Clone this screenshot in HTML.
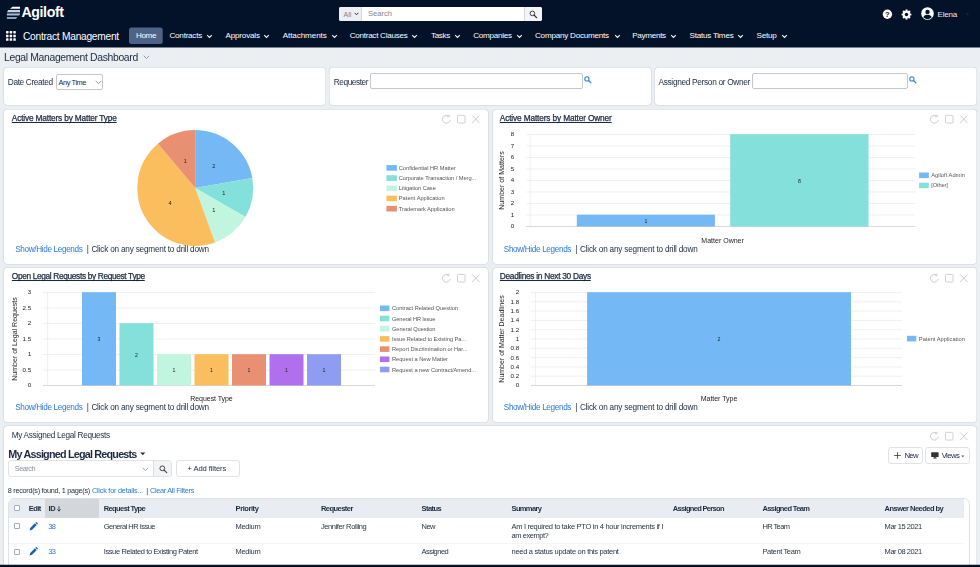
<!DOCTYPE html>
<html><head><meta charset="utf-8"><title>Legal Management Dashboard</title>
<style>
*{box-sizing:border-box;margin:0;padding:0}
html,body{width:980px;height:567px;overflow:hidden;background:#eceff2;font-family:"Liberation Sans",sans-serif;color:#1b2a3f;font-size:9px}
.abs{position:absolute}
.t{position:absolute;white-space:nowrap}
#hdr{position:absolute;left:0;top:0;width:980px;height:48px;background:linear-gradient(#031229,#031229) no-repeat 0 0/980px 47px,#79838f}
.panel{position:absolute;background:#fff;border:1px solid #dde2e8;border-radius:4px}
.inp{position:absolute;background:#fff;border:1px solid #c4c8cd;border-radius:2px}
.btn{position:absolute;background:#fff;border:1px solid #dfe2e6;border-radius:3px}
svg text{font-family:"Liberation Sans",sans-serif}
#charts{position:absolute;left:0;top:0}
#wrap{position:absolute;left:0;top:0;width:980px;height:567px;overflow:hidden;opacity:.999}
</style></head><body>
<div id="wrap">
<div id="hdr">
  <svg class="abs" style="left:0;top:0" width="70" height="24" viewBox="0 0 70 24">
    <path d="M7.2 12.1 H20 V13.5 H6.9 Z" fill="#3a4963"/>
    <path d="M12.6 6.8 H20 V8.7 H10 Z" fill="#ffffff"/>
    <path d="M8.1 10.1 H20 V12.1 H7.1 Z" fill="#c6d1e1"/>
    <path d="M6.9 13.6 H20 V14.6 L19 15.6 H6.9 Z" fill="#a9b8ce"/>
    <path d="M6.9 17 H17.4 L15.9 18.9 H6.9 Z" fill="#8e9fb9"/>
    <text x="21.4" y="16.9" font-size="14.2" font-weight="bold" fill="#fff" textLength="42.6" lengthAdjust="spacing">Agiloft</text>
  </svg>
  <div class="abs" style="left:339px;top:7px;width:203.4px;height:14px;background:#fff;border-radius:2px;overflow:hidden">
    <div class="abs" style="left:0;top:0;width:22.5px;height:14px;background:#eceff3;border-right:1px solid #d5d9df"></div>
    <div class="abs" style="left:4.5px;top:2.5px;font-size:7px;color:#7d8593;line-height:9px">All</div>
    <svg class="abs" style="left:14.5px;top:5.3px" width="5" height="4" viewBox="0 0 5 4"><path d="M0.6 0.8 L2.5 2.8 L4.4 0.8" fill="none" stroke="#333" stroke-width="1"/></svg>
    <div class="abs" style="left:29px;top:2px;font-size:7.6px;color:#7d8593;line-height:10px">Search</div>
    <div class="abs" style="left:184.5px;top:0;width:19px;height:14px;background:#f4f5f7;border-left:1px solid #d5d9df"></div>
    <svg class="abs" style="left:190px;top:3px" width="9" height="9" viewBox="0 0 9 9"><circle cx="3.4" cy="3.4" r="2.3" fill="none" stroke="#333" stroke-width="0.95"/><path d="M5.2 5.2 L7.6 7.6" stroke="#333" stroke-width="1.25" stroke-linecap="round"/></svg>
  </div>
  <svg class="abs" style="left:882px;top:9px" width="11" height="11" viewBox="0 0 11 11"><circle cx="5.4" cy="5.2" r="4.7" fill="#fff"/><text x="5.4" y="8" font-size="7.5" font-weight="bold" text-anchor="middle" fill="#031229">?</text></svg>
  <svg class="abs" style="left:901.3px;top:8.8px" width="11" height="11" viewBox="0 0 11 11"><g fill="#fff"><circle cx="5.5" cy="5.5" r="3.6"/><rect x="4.4" y="0.6" width="2.2" height="9.8" rx=".5"/><rect x="4.4" y="0.6" width="2.2" height="9.8" rx=".5" transform="rotate(45 5.5 5.5)"/><rect x="4.4" y="0.6" width="2.2" height="9.8" rx=".5" transform="rotate(90 5.5 5.5)"/><rect x="4.4" y="0.6" width="2.2" height="9.8" rx=".5" transform="rotate(135 5.5 5.5)"/></g><circle cx="5.5" cy="5.5" r="1.7" fill="#031229"/></svg>
  <svg class="abs" style="left:921px;top:7.4px" width="13" height="13" viewBox="0 0 13 13"><circle cx="6.5" cy="6.5" r="6.3" fill="#fff"/><circle cx="6.5" cy="4.9" r="2.2" fill="#031229"/><path d="M2.3 10.2 C3 8.2 5 7.7 6.5 7.7 C8 7.7 10 8.2 10.7 10.2 C9.6 11.4 8.1 12 6.5 12 C4.9 12 3.4 11.4 2.3 10.2Z" fill="#031229"/></svg>
  <svg class="abs" style="left:5.9px;top:31px" width="11" height="11" viewBox="0 0 11 11" fill="#fff"><rect x="0.00" y="0.00" width="2.5" height="2.5" rx=".4"/><rect x="3.65" y="0.00" width="2.5" height="2.5" rx=".4"/><rect x="7.30" y="0.00" width="2.5" height="2.5" rx=".4"/><rect x="0.00" y="3.65" width="2.5" height="2.5" rx=".4"/><rect x="3.65" y="3.65" width="2.5" height="2.5" rx=".4"/><rect x="7.30" y="3.65" width="2.5" height="2.5" rx=".4"/><rect x="0.00" y="7.30" width="2.5" height="2.5" rx=".4"/><rect x="3.65" y="7.30" width="2.5" height="2.5" rx=".4"/><rect x="7.30" y="7.30" width="2.5" height="2.5" rx=".4"/></svg>
  <svg class="abs" style="left:0;top:0" width="200" height="47"><rect x="129" y="27.6" width="33.7" height="16.5" rx="2.5" fill="#4f6386"/></svg>

<div class="t " style="left:937.60px;top:9.50px;font-size:8px;line-height:10px;letter-spacing:-0.212px;color:#e8ebf0;">Elena</div>
<svg class="abs" style="left:964.5px;top:12.5px" width="5" height="4" viewBox="0 0 5 4"><path d="M0.3 0.5 H4.3 L2.3 2.8Z" fill="#16243c"/></svg>
<div class="t " style="left:23.00px;top:30.50px;font-size:10.2px;line-height:12px;letter-spacing:-0.259px;color:#fff;">Contract Management</div>
<div class="t " style="left:135.90px;top:30.50px;font-size:8.1px;line-height:10px;letter-spacing:-0.352px;color:#fff;">Home</div>
<div class="t " style="left:169.50px;top:30.50px;font-size:8.1px;line-height:10px;letter-spacing:-0.240px;color:#fff;">Contracts</div>
<svg class="abs" style="left:205.8px;top:33.6px" width="7" height="5" viewBox="0 0 7 5"><path d="M1.2 1.1 L3.5 3.4 L5.8 1.1" fill="none" stroke="#fff" stroke-width="1.05"/></svg>
<div class="t " style="left:225.50px;top:30.50px;font-size:8.1px;line-height:10px;letter-spacing:-0.191px;color:#fff;">Approvals</div>
<svg class="abs" style="left:263.2px;top:33.6px" width="7" height="5" viewBox="0 0 7 5"><path d="M1.2 1.1 L3.5 3.4 L5.8 1.1" fill="none" stroke="#fff" stroke-width="1.05"/></svg>
<div class="t " style="left:282.70px;top:30.50px;font-size:8.1px;line-height:10px;letter-spacing:-0.093px;color:#fff;">Attachments</div>
<svg class="abs" style="left:330.5px;top:33.6px" width="7" height="5" viewBox="0 0 7 5"><path d="M1.2 1.1 L3.5 3.4 L5.8 1.1" fill="none" stroke="#fff" stroke-width="1.05"/></svg>
<div class="t " style="left:349.70px;top:30.50px;font-size:8.1px;line-height:10px;letter-spacing:-0.270px;color:#fff;">Contract Clauses</div>
<svg class="abs" style="left:411.0px;top:33.6px" width="7" height="5" viewBox="0 0 7 5"><path d="M1.2 1.1 L3.5 3.4 L5.8 1.1" fill="none" stroke="#fff" stroke-width="1.05"/></svg>
<div class="t " style="left:431.00px;top:30.50px;font-size:8.1px;line-height:10px;letter-spacing:-0.341px;color:#fff;">Tasks</div>
<svg class="abs" style="left:453.7px;top:33.6px" width="7" height="5" viewBox="0 0 7 5"><path d="M1.2 1.1 L3.5 3.4 L5.8 1.1" fill="none" stroke="#fff" stroke-width="1.05"/></svg>
<div class="t " style="left:473.20px;top:30.50px;font-size:8.1px;line-height:10px;letter-spacing:-0.275px;color:#fff;">Companies</div>
<svg class="abs" style="left:515.7px;top:33.6px" width="7" height="5" viewBox="0 0 7 5"><path d="M1.2 1.1 L3.5 3.4 L5.8 1.1" fill="none" stroke="#fff" stroke-width="1.05"/></svg>
<div class="t " style="left:535.00px;top:30.50px;font-size:8.1px;line-height:10px;letter-spacing:-0.229px;color:#fff;">Company Documents</div>
<svg class="abs" style="left:613.5px;top:33.6px" width="7" height="5" viewBox="0 0 7 5"><path d="M1.2 1.1 L3.5 3.4 L5.8 1.1" fill="none" stroke="#fff" stroke-width="1.05"/></svg>
<div class="t " style="left:632.20px;top:30.50px;font-size:8.1px;line-height:10px;letter-spacing:-0.289px;color:#fff;">Payments</div>
<svg class="abs" style="left:669.7px;top:33.6px" width="7" height="5" viewBox="0 0 7 5"><path d="M1.2 1.1 L3.5 3.4 L5.8 1.1" fill="none" stroke="#fff" stroke-width="1.05"/></svg>
<div class="t " style="left:689.50px;top:30.50px;font-size:8.1px;line-height:10px;letter-spacing:-0.235px;color:#fff;">Status Times</div>
<svg class="abs" style="left:737.2px;top:33.6px" width="7" height="5" viewBox="0 0 7 5"><path d="M1.2 1.1 L3.5 3.4 L5.8 1.1" fill="none" stroke="#fff" stroke-width="1.05"/></svg>
<div class="t " style="left:756.50px;top:30.50px;font-size:8.1px;line-height:10px;letter-spacing:-0.234px;color:#fff;">Setup</div>
<svg class="abs" style="left:780.5px;top:33.6px" width="7" height="5" viewBox="0 0 7 5"><path d="M1.2 1.1 L3.5 3.4 L5.8 1.1" fill="none" stroke="#fff" stroke-width="1.05"/></svg>
</div>
<div class="t " style="left:4.00px;top:51.50px;font-size:10.4px;line-height:12px;letter-spacing:-0.339px;color:#1b2a3f;">Legal Management Dashboard</div>
<svg class="abs" style="left:143px;top:54.5px" width="7" height="5" viewBox="0 0 7 5"><path d="M0.8 0.8 L3.5 3.6 L6.2 0.8" fill="none" stroke="#8a919c" stroke-width="0.9"/></svg>
<svg class="abs" style="left:0;top:0" width="980" height="567" viewBox="0 0 980 567">
<rect x="3.5" y="67" width="322.5" height="38.5" rx="4" fill="#c9d1db"/>
<rect x="4.0" y="67.5" width="321.5" height="37.5" rx="3.5" fill="#fff"/>
<rect x="329" y="67" width="322.5" height="38.5" rx="4" fill="#c9d1db"/>
<rect x="329.5" y="67.5" width="321.5" height="37.5" rx="3.5" fill="#fff"/>
<rect x="654.5" y="67" width="322.5" height="38.5" rx="4" fill="#c9d1db"/>
<rect x="655.0" y="67.5" width="321.5" height="37.5" rx="3.5" fill="#fff"/>
<rect x="3.5" y="109" width="485.0" height="155.5" rx="4" fill="#c9d1db"/>
<rect x="4.0" y="109.5" width="484.0" height="154.5" rx="3.5" fill="#fff"/>
<rect x="492.5" y="109" width="484.5" height="155.5" rx="4" fill="#c9d1db"/>
<rect x="493.0" y="109.5" width="483.5" height="154.5" rx="3.5" fill="#fff"/>
<rect x="3.5" y="267.3" width="485.0" height="155.5" rx="4" fill="#c9d1db"/>
<rect x="4.0" y="267.8" width="484.0" height="154.5" rx="3.5" fill="#fff"/>
<rect x="492.5" y="267.3" width="484.5" height="155.5" rx="4" fill="#c9d1db"/>
<rect x="493.0" y="267.8" width="483.5" height="154.5" rx="3.5" fill="#fff"/>
<rect x="3.5" y="425.5" width="973.5" height="154.5" rx="4" fill="#c9d1db"/>
<rect x="4.0" y="426.0" width="972.5" height="153.5" rx="3.5" fill="#fff"/>
</svg>
<div class="t " style="left:7.80px;top:77.00px;font-size:8.3px;line-height:10px;letter-spacing:-0.372px;color:#1b2a3f;">Date Created</div>
<div class="inp" style="left:56px;top:74px;width:46.5px;height:16px"></div>
<div class="t " style="left:58.60px;top:78.00px;font-size:7.4px;line-height:9px;letter-spacing:-0.418px;color:#1b2a3f;">Any Time</div>
<svg class="abs" style="left:94.8px;top:80px" width="7" height="5" viewBox="0 0 7 5"><path d="M0.8 0.8 L3.5 3.6 L6.2 0.8" fill="none" stroke="#8a919c" stroke-width="0.8"/></svg>
<div class="t " style="left:333.75px;top:77.00px;font-size:8.3px;line-height:10px;letter-spacing:-0.444px;color:#1b2a3f;">Requester</div>
<div class="inp" style="left:370px;top:73px;width:213.4px;height:16px"></div>
<div class="t " style="left:658.50px;top:77.00px;font-size:8.3px;line-height:10px;letter-spacing:-0.320px;color:#1b2a3f;">Assigned Person or Owner</div>
<div class="inp" style="left:752px;top:73px;width:156px;height:16px"></div>
<svg class="abs" style="left:583.9px;top:75.9px" width="8" height="8" viewBox="0 0 8 8"><circle cx="2.9" cy="2.9" r="2.1" fill="none" stroke="#2e86d6" stroke-width="1.1"/><path d="M4.5 4.5 L6.9 6.9" stroke="#2e86d6" stroke-width="1.3" stroke-linecap="round"/></svg>
<svg class="abs" style="left:908.6px;top:75.9px" width="8" height="8" viewBox="0 0 8 8"><circle cx="2.9" cy="2.9" r="2.1" fill="none" stroke="#2e86d6" stroke-width="1.1"/><path d="M4.5 4.5 L6.9 6.9" stroke="#2e86d6" stroke-width="1.3" stroke-linecap="round"/></svg>
<svg class="abs" style="left:442.2px;top:114.3px" width="40" height="10" viewBox="0 0 40 10" fill="none" stroke="#c3c7cd" stroke-width="0.9"><path d="M6.75 2.1 A3.9 3.9 0 1 0 8.25 5.9"/><path d="M7.1 0.7 V2.6 H5.2" stroke-width="0.8"/><rect x="15.5" y="1.4" width="7.5" height="7.6" rx="0.8" stroke-width="0.8"/><path d="M30.2 1.5 L37.4 9 M37.4 1.5 L30.2 9"/></svg>
<svg class="abs" style="left:930.0px;top:114.3px" width="40" height="10" viewBox="0 0 40 10" fill="none" stroke="#c3c7cd" stroke-width="0.9"><path d="M6.75 2.1 A3.9 3.9 0 1 0 8.25 5.9"/><path d="M7.1 0.7 V2.6 H5.2" stroke-width="0.8"/><rect x="15.5" y="1.4" width="7.5" height="7.6" rx="0.8" stroke-width="0.8"/><path d="M30.2 1.5 L37.4 9 M37.4 1.5 L30.2 9"/></svg>
<svg class="abs" style="left:442.2px;top:272.5px" width="40" height="10" viewBox="0 0 40 10" fill="none" stroke="#c3c7cd" stroke-width="0.9"><path d="M6.75 2.1 A3.9 3.9 0 1 0 8.25 5.9"/><path d="M7.1 0.7 V2.6 H5.2" stroke-width="0.8"/><rect x="15.5" y="1.4" width="7.5" height="7.6" rx="0.8" stroke-width="0.8"/><path d="M30.2 1.5 L37.4 9 M37.4 1.5 L30.2 9"/></svg>
<svg class="abs" style="left:930.0px;top:272.5px" width="40" height="10" viewBox="0 0 40 10" fill="none" stroke="#c3c7cd" stroke-width="0.9"><path d="M6.75 2.1 A3.9 3.9 0 1 0 8.25 5.9"/><path d="M7.1 0.7 V2.6 H5.2" stroke-width="0.8"/><rect x="15.5" y="1.4" width="7.5" height="7.6" rx="0.8" stroke-width="0.8"/><path d="M30.2 1.5 L37.4 9 M37.4 1.5 L30.2 9"/></svg>
<svg class="abs" style="left:930.0px;top:431px" width="40" height="10" viewBox="0 0 40 10" fill="none" stroke="#c3c7cd" stroke-width="0.9"><path d="M6.75 2.1 A3.9 3.9 0 1 0 8.25 5.9"/><path d="M7.1 0.7 V2.6 H5.2" stroke-width="0.8"/><rect x="15.5" y="1.4" width="7.5" height="7.6" rx="0.8" stroke-width="0.8"/><path d="M30.2 1.5 L37.4 9 M37.4 1.5 L30.2 9"/></svg>
<div class="t " style="left:11.80px;top:113.00px;font-size:8.3px;line-height:10px;letter-spacing:-0.163px;color:#1b2a3f;text-decoration:underline;text-underline-offset:0.5px;text-decoration-thickness:0.8px;text-decoration-skip-ink:none;-webkit-text-stroke:0.25px #1b2a3f;">Active Matters by Matter Type</div>
<div class="t " style="left:499.80px;top:113.00px;font-size:8.3px;line-height:10px;letter-spacing:-0.144px;color:#1b2a3f;text-decoration:underline;text-underline-offset:0.5px;text-decoration-thickness:0.8px;text-decoration-skip-ink:none;-webkit-text-stroke:0.25px #1b2a3f;">Active Matters by Matter Owner</div>
<div class="t " style="left:11.80px;top:271.00px;font-size:8.3px;line-height:10px;letter-spacing:-0.335px;color:#1b2a3f;text-decoration:underline;text-underline-offset:0.5px;text-decoration-thickness:0.8px;text-decoration-skip-ink:none;-webkit-text-stroke:0.25px #1b2a3f;">Open Legal Requests by Request Type</div>
<div class="t " style="left:499.80px;top:271.00px;font-size:8.3px;line-height:10px;letter-spacing:-0.272px;color:#1b2a3f;text-decoration:underline;text-underline-offset:0.5px;text-decoration-thickness:0.8px;text-decoration-skip-ink:none;-webkit-text-stroke:0.25px #1b2a3f;">Deadlines in Next 30 Days</div>
<div class="t " style="left:15.20px;top:244.50px;font-size:8.2px;line-height:10px;letter-spacing:-0.353px;color:#2a79d2;">Show/Hide Legends</div>
<div class="t " style="left:86.70px;top:244.50px;font-size:8.2px;line-height:10px;color:#1b2a3f;">|</div>
<div class="t " style="left:91.40px;top:244.50px;font-size:8.2px;line-height:10px;letter-spacing:-0.198px;color:#1b2a3f;">Click on any segment to drill down</div>
<div class="t " style="left:503.80px;top:244.50px;font-size:8.2px;line-height:10px;letter-spacing:-0.353px;color:#2a79d2;">Show/Hide Legends</div>
<div class="t " style="left:575.30px;top:244.50px;font-size:8.2px;line-height:10px;color:#1b2a3f;">|</div>
<div class="t " style="left:580.00px;top:244.50px;font-size:8.2px;line-height:10px;letter-spacing:-0.198px;color:#1b2a3f;">Click on any segment to drill down</div>
<div class="t " style="left:15.20px;top:402.50px;font-size:8.2px;line-height:10px;letter-spacing:-0.353px;color:#2a79d2;">Show/Hide Legends</div>
<div class="t " style="left:86.70px;top:402.50px;font-size:8.2px;line-height:10px;color:#1b2a3f;">|</div>
<div class="t " style="left:91.40px;top:402.50px;font-size:8.2px;line-height:10px;letter-spacing:-0.198px;color:#1b2a3f;">Click on any segment to drill down</div>
<div class="t " style="left:503.80px;top:402.50px;font-size:8.2px;line-height:10px;letter-spacing:-0.353px;color:#2a79d2;">Show/Hide Legends</div>
<div class="t " style="left:575.30px;top:402.50px;font-size:8.2px;line-height:10px;color:#1b2a3f;">|</div>
<div class="t " style="left:580.00px;top:402.50px;font-size:8.2px;line-height:10px;letter-spacing:-0.198px;color:#1b2a3f;">Click on any segment to drill down</div>
<svg id="charts" width="980" height="567" viewBox="0 0 980 567">
<path d="M195.2 188.1 L195.20 130.10 A58 58 0 0 1 252.32 178.03 Z" fill="#74b9f5"/>
<text x="213.84" y="167.88" font-size="5.6" fill="#222" text-anchor="middle">2</text>
<path d="M195.2 188.1 L252.32 178.03 A58 58 0 0 1 245.43 217.10 Z" fill="#83e0da"/>
<text x="223.76" y="195.14" font-size="5.6" fill="#222" text-anchor="middle">1</text>
<path d="M195.2 188.1 L245.43 217.10 A58 58 0 0 1 215.04 242.60 Z" fill="#c1f5e0"/>
<text x="213.84" y="212.32" font-size="5.6" fill="#222" text-anchor="middle">1</text>
<path d="M195.2 188.1 L215.04 242.60 A58 58 0 0 1 157.92 143.67 Z" fill="#fabe5f"/>
<text x="170.09" y="204.60" font-size="5.6" fill="#222" text-anchor="middle">4</text>
<path d="M195.2 188.1 L157.92 143.67 A58 58 0 0 1 195.20 130.10 Z" fill="#e99073"/>
<text x="185.28" y="162.85" font-size="5.6" fill="#222" text-anchor="middle">1</text>
<rect x="386.4" y="165.1" width="10.5" height="5.6" fill="#74b9f5"/>
<text x="398.80" y="169.90" font-size="5.7" fill="#555" textLength="56.90" lengthAdjust="spacing">Confidential HR Matter</text>
<rect x="386.4" y="175.29" width="10.5" height="5.6" fill="#83e0da"/>
<text x="398.80" y="180.09" font-size="5.7" fill="#555" textLength="77.40" lengthAdjust="spacing">Corporate Transaction / Merg...</text>
<rect x="386.4" y="185.48" width="10.5" height="5.6" fill="#c1f5e0"/>
<text x="398.80" y="190.28" font-size="5.7" fill="#555" textLength="37.00" lengthAdjust="spacing">Litigation Case</text>
<rect x="386.4" y="195.67" width="10.5" height="5.6" fill="#fabe5f"/>
<text x="398.80" y="200.47" font-size="5.7" fill="#555" textLength="45.80" lengthAdjust="spacing">Patent Application</text>
<rect x="386.4" y="205.85999999999999" width="10.5" height="5.6" fill="#e99073"/>
<text x="398.80" y="210.66" font-size="5.7" fill="#555" textLength="55.80" lengthAdjust="spacing">Trademark Application</text>
<text x="514.30" y="228.40" font-size="6.2" fill="#222" text-anchor="end">0</text>
<path d="M526.2 215.00 H915" stroke="#eaeaea" stroke-width="0.7"/>
<text x="514.30" y="216.90" font-size="6.2" fill="#222" text-anchor="end">1</text>
<path d="M526.2 203.50 H915" stroke="#eaeaea" stroke-width="0.7"/>
<text x="514.30" y="205.40" font-size="6.2" fill="#222" text-anchor="end">2</text>
<path d="M526.2 192.00 H915" stroke="#eaeaea" stroke-width="0.7"/>
<text x="514.30" y="193.90" font-size="6.2" fill="#222" text-anchor="end">3</text>
<path d="M526.2 180.50 H915" stroke="#eaeaea" stroke-width="0.7"/>
<text x="514.30" y="182.40" font-size="6.2" fill="#222" text-anchor="end">4</text>
<path d="M526.2 169.00 H915" stroke="#eaeaea" stroke-width="0.7"/>
<text x="514.30" y="170.90" font-size="6.2" fill="#222" text-anchor="end">5</text>
<path d="M526.2 157.50 H915" stroke="#eaeaea" stroke-width="0.7"/>
<text x="514.30" y="159.40" font-size="6.2" fill="#222" text-anchor="end">6</text>
<path d="M526.2 146.00 H915" stroke="#eaeaea" stroke-width="0.7"/>
<text x="514.30" y="147.90" font-size="6.2" fill="#222" text-anchor="end">7</text>
<path d="M526.2 134.50 H915" stroke="#eaeaea" stroke-width="0.7"/>
<text x="514.30" y="136.40" font-size="6.2" fill="#222" text-anchor="end">8</text>
<path d="M530.2 134.5 V226.5" stroke="#eaeaea" stroke-width="0.7"/>
<path d="M526.2 226.5 H915" stroke="#cfcfcf" stroke-width="0.8"/>
<rect x="576.8" y="214.70" width="138.10" height="11.80" fill="#74b9f5"/>
<text x="645.85" y="222.75" font-size="5.2" fill="#222" text-anchor="middle">1</text>
<rect x="730.2" y="134.20" width="138.30" height="92.30" fill="#83e0da"/>
<text x="799.35" y="182.50" font-size="5.2" fill="#222" text-anchor="middle">8</text>
<text transform="translate(504.4 180.5) rotate(-90)" font-size="7" fill="#222" text-anchor="middle" textLength="58.5" lengthAdjust="spacing">Number of Matters</text>
<text x="722.60" y="242.60" font-size="7" fill="#222" text-anchor="middle" textLength="42.50" lengthAdjust="spacing">Matter Owner</text>
<rect x="919.1" y="172.5" width="9.7" height="5.6" fill="#74b9f5"/>
<text x="931.25" y="177.30" font-size="5.7" fill="#555" textLength="33.60" lengthAdjust="spacing">Agiloft Admin</text>
<rect x="919.1" y="182.64999999999998" width="9.7" height="5.6" fill="#83e0da"/>
<text x="931.25" y="187.45" font-size="5.7" fill="#555" textLength="16.70" lengthAdjust="spacing">[Other]</text>
<text x="31.20" y="387.40" font-size="6.2" fill="#222" text-anchor="end">0</text>
<path d="M42.9 370.00 H375" stroke="#eaeaea" stroke-width="0.7"/>
<text x="31.20" y="371.90" font-size="6.2" fill="#222" text-anchor="end">0.5</text>
<path d="M42.9 354.50 H375" stroke="#eaeaea" stroke-width="0.7"/>
<text x="31.20" y="356.40" font-size="6.2" fill="#222" text-anchor="end">1</text>
<path d="M42.9 339.00 H375" stroke="#eaeaea" stroke-width="0.7"/>
<text x="31.20" y="340.90" font-size="6.2" fill="#222" text-anchor="end">1.5</text>
<path d="M42.9 323.50 H375" stroke="#eaeaea" stroke-width="0.7"/>
<text x="31.20" y="325.40" font-size="6.2" fill="#222" text-anchor="end">2</text>
<path d="M42.9 308.00 H375" stroke="#eaeaea" stroke-width="0.7"/>
<text x="31.20" y="309.90" font-size="6.2" fill="#222" text-anchor="end">2.5</text>
<path d="M42.9 292.50 H375" stroke="#eaeaea" stroke-width="0.7"/>
<text x="31.20" y="294.40" font-size="6.2" fill="#222" text-anchor="end">3</text>
<path d="M47.6 292.5 V385.5" stroke="#eaeaea" stroke-width="0.7"/>
<path d="M42.9 385.5 H375" stroke="#cfcfcf" stroke-width="0.8"/>
<rect x="82.0" y="292.20" width="34.00" height="93.30" fill="#74b9f5"/>
<text x="99.00" y="341.00" font-size="5.2" fill="#222" text-anchor="middle">3</text>
<rect x="119.5" y="323.20" width="34.00" height="62.30" fill="#83e0da"/>
<text x="136.50" y="356.50" font-size="5.2" fill="#222" text-anchor="middle">2</text>
<rect x="157.0" y="354.20" width="34.00" height="31.30" fill="#c1f5e0"/>
<text x="174.00" y="372.00" font-size="5.2" fill="#222" text-anchor="middle">1</text>
<rect x="194.5" y="354.20" width="34.00" height="31.30" fill="#fabe5f"/>
<text x="211.50" y="372.00" font-size="5.2" fill="#222" text-anchor="middle">1</text>
<rect x="232.0" y="354.20" width="34.00" height="31.30" fill="#e99073"/>
<text x="249.00" y="372.00" font-size="5.2" fill="#222" text-anchor="middle">1</text>
<rect x="269.5" y="354.20" width="34.00" height="31.30" fill="#b070ee"/>
<text x="286.50" y="372.00" font-size="5.2" fill="#222" text-anchor="middle">1</text>
<rect x="307.0" y="354.20" width="34.00" height="31.30" fill="#8e9cf2"/>
<text x="324.00" y="372.00" font-size="5.2" fill="#222" text-anchor="middle">1</text>
<text transform="translate(17.3 339.0) rotate(-90)" font-size="7" fill="#222" text-anchor="middle" textLength="83.5" lengthAdjust="spacing">Number of Legal Requests</text>
<text x="211.50" y="400.90" font-size="7" fill="#222" text-anchor="middle" textLength="42.50" lengthAdjust="spacing">Request Type</text>
<rect x="380" y="305.5" width="9.4" height="5.6" fill="#74b9f5"/>
<text x="392.00" y="310.30" font-size="5.7" fill="#555" textLength="66.00" lengthAdjust="spacing">Contract Related Question</text>
<rect x="380" y="315.7" width="9.4" height="5.6" fill="#83e0da"/>
<text x="392.00" y="320.50" font-size="5.7" fill="#555" textLength="43.50" lengthAdjust="spacing">General HR Issue</text>
<rect x="380" y="325.9" width="9.4" height="5.6" fill="#c1f5e0"/>
<text x="392.00" y="330.70" font-size="5.7" fill="#555" textLength="43.50" lengthAdjust="spacing">General Question</text>
<rect x="380" y="336.1" width="9.4" height="5.6" fill="#fabe5f"/>
<text x="392.00" y="340.90" font-size="5.7" fill="#555" textLength="74.00" lengthAdjust="spacing">Issue Related to Existing Pa...</text>
<rect x="380" y="346.3" width="9.4" height="5.6" fill="#e99073"/>
<text x="392.00" y="351.10" font-size="5.7" fill="#555" textLength="75.50" lengthAdjust="spacing">Report Discrimination or Har...</text>
<rect x="380" y="356.5" width="9.4" height="5.6" fill="#b070ee"/>
<text x="392.00" y="361.30" font-size="5.7" fill="#555" textLength="56.00" lengthAdjust="spacing">Request a New Matter</text>
<rect x="380" y="366.7" width="9.4" height="5.6" fill="#8e9cf2"/>
<text x="392.00" y="371.50" font-size="5.7" fill="#555" textLength="84.00" lengthAdjust="spacing">Request a new Contract/Amend...</text>
<text x="519.10" y="387.40" font-size="6.2" fill="#222" text-anchor="end">0</text>
<path d="M531 376.20 H902" stroke="#eaeaea" stroke-width="0.7"/>
<text x="519.10" y="378.10" font-size="6.2" fill="#222" text-anchor="end">0.2</text>
<path d="M531 366.90 H902" stroke="#eaeaea" stroke-width="0.7"/>
<text x="519.10" y="368.80" font-size="6.2" fill="#222" text-anchor="end">0.4</text>
<path d="M531 357.60 H902" stroke="#eaeaea" stroke-width="0.7"/>
<text x="519.10" y="359.50" font-size="6.2" fill="#222" text-anchor="end">0.6</text>
<path d="M531 348.30 H902" stroke="#eaeaea" stroke-width="0.7"/>
<text x="519.10" y="350.20" font-size="6.2" fill="#222" text-anchor="end">0.8</text>
<path d="M531 339.00 H902" stroke="#eaeaea" stroke-width="0.7"/>
<text x="519.10" y="340.90" font-size="6.2" fill="#222" text-anchor="end">1</text>
<path d="M531 329.70 H902" stroke="#eaeaea" stroke-width="0.7"/>
<text x="519.10" y="331.60" font-size="6.2" fill="#222" text-anchor="end">1.2</text>
<path d="M531 320.40 H902" stroke="#eaeaea" stroke-width="0.7"/>
<text x="519.10" y="322.30" font-size="6.2" fill="#222" text-anchor="end">1.4</text>
<path d="M531 311.10 H902" stroke="#eaeaea" stroke-width="0.7"/>
<text x="519.10" y="313.00" font-size="6.2" fill="#222" text-anchor="end">1.6</text>
<path d="M531 301.80 H902" stroke="#eaeaea" stroke-width="0.7"/>
<text x="519.10" y="303.70" font-size="6.2" fill="#222" text-anchor="end">1.8</text>
<path d="M531 292.50 H902" stroke="#eaeaea" stroke-width="0.7"/>
<text x="519.10" y="294.40" font-size="6.2" fill="#222" text-anchor="end">2</text>
<path d="M535.5 292.5 V385.5" stroke="#eaeaea" stroke-width="0.7"/>
<path d="M531 385.5 H902" stroke="#cfcfcf" stroke-width="0.8"/>
<rect x="587.1" y="292.20" width="263.90" height="93.30" fill="#74b9f5"/>
<text x="719.05" y="341.00" font-size="5.2" fill="#222" text-anchor="middle">2</text>
<text transform="translate(504.4 339.0) rotate(-90)" font-size="7" fill="#222" text-anchor="middle" textLength="87.3" lengthAdjust="spacing">Number of Matter Deadlines</text>
<text x="719.00" y="400.90" font-size="7" fill="#222" text-anchor="middle" textLength="36.60" lengthAdjust="spacing">Matter Type</text>
<rect x="907" y="335.8" width="9.3" height="5.6" fill="#74b9f5"/>
<text x="918.85" y="340.60" font-size="5.7" fill="#555" textLength="46.00" lengthAdjust="spacing">Patent Application</text>
</svg>
<div class="t " style="left:11.70px;top:430.50px;font-size:8.2px;line-height:10px;letter-spacing:-0.287px;color:#1b2a3f;">My Assigned Legal Requests</div>
<div class="t " style="left:8.30px;top:447.50px;font-size:10.8px;line-height:13px;letter-spacing:-0.798px;color:#1b2a3f;font-weight:bold;">My Assigned Legal Requests</div>
<svg class="abs" style="left:139.8px;top:452.3px" width="6" height="4" viewBox="0 0 6 4"><path d="M0.3 0.5 H5.3 L2.8 3.3Z" fill="#1b2a3f"/></svg>
<div class="btn" style="left:8px;top:460px;width:164px;height:17px"></div>
<div class="abs" style="left:152.5px;top:461px;width:18.5px;height:15px;background:#f3f4f6;border-left:1px solid #d9dde2;border-radius:0 3px 3px 0"></div>
<div class="t " style="left:14.80px;top:464.00px;font-size:7.4px;line-height:9px;letter-spacing:-0.525px;color:#8a919c;">Search</div>
<svg class="abs" style="left:141.8px;top:466.5px" width="7" height="5" viewBox="0 0 7 5"><path d="M0.8 0.8 L3.5 3.6 L6.2 0.8" fill="none" stroke="#8a919c" stroke-width="0.8"/></svg>
<svg class="abs" style="left:158.5px;top:464.5px" width="9" height="9" viewBox="0 0 9 9"><circle cx="3.3" cy="3.3" r="2.4" fill="none" stroke="#444" stroke-width="1"/><path d="M5.1 5.1 L7.7 7.7" stroke="#444" stroke-width="1.2" stroke-linecap="round"/></svg>
<div class="btn" style="left:176px;top:460px;width:64px;height:17px"></div>
<div class="t " style="left:187.50px;top:464.00px;font-size:7.6px;line-height:9px;letter-spacing:-0.094px;color:#1b2a3f;">+ Add filters</div>
<div class="t " style="left:7.80px;top:486.00px;font-size:7.3px;line-height:9px;letter-spacing:-0.296px;color:#1b2a3f;">8 record(s) found, 1 page(s)</div>
<div class="t " style="left:91.90px;top:486.00px;font-size:7.3px;line-height:9px;letter-spacing:-0.229px;color:#2a79d2;">Click for details...</div>
<div class="t " style="left:146.30px;top:486.00px;font-size:7.3px;line-height:9px;color:#1b2a3f;">|</div>
<div class="t " style="left:150.00px;top:486.00px;font-size:7.3px;line-height:9px;letter-spacing:-0.299px;color:#2a79d2;">Clear All Filters</div>
<div class="btn" style="left:888px;top:447px;width:35px;height:17px"></div>
<div class="btn" style="left:925px;top:447px;width:45px;height:17px"></div>
<svg class="abs" style="left:893.8px;top:452px" width="7" height="7" viewBox="0 0 7 7"><path d="M3.5 0.2 V6.8 M0.2 3.5 H6.8" stroke="#333" stroke-width="0.8"/></svg>
<div class="t " style="left:904.50px;top:451.00px;font-size:7.8px;line-height:9px;letter-spacing:-0.768px;color:#1b2a3f;">New</div>
<svg class="abs" style="left:931.2px;top:451.8px" width="8" height="7" viewBox="0 0 8 7"><rect x="0.2" y="0.2" width="7.4" height="4.8" rx="0.5" fill="#333"/><rect x="2.2" y="5.6" width="3.4" height="0.9" fill="#333"/><rect x="3.2" y="4.8" width="1.4" height="1.2" fill="#333"/></svg>
<div class="t " style="left:941.70px;top:451.00px;font-size:7.8px;line-height:9px;letter-spacing:-0.633px;color:#1b2a3f;">Views</div>
<svg class="abs" style="left:961.2px;top:454.7px" width="4" height="3" viewBox="0 0 4 3"><path d="M0.3 0.4 H3.3 L1.8 2.3Z" fill="#555"/></svg>
<div class="abs" style="left:8.3px;top:498.3px;width:961.5px;height:80px;border:1px solid #dde2e8;border-radius:6px;background:#fff;overflow:hidden"><div class="abs" style="left:0;top:0;width:954.4px;height:18.4px;background:#e9edf2"></div><div class="abs" style="left:35.3px;top:0;width:54.7px;height:18.4px;background:#d3d7dc"></div><div class="abs" style="left:0;top:44.2px;width:954.4px;height:1px;background:#f3f5f7"></div></div>
<div class="abs" style="left:14px;top:505.20000000000005px;width:6px;height:6px;border:1px solid #a3a9b1;border-radius:1px;background:#fff"></div>
<div class="abs" style="left:14px;top:523.3000000000001px;width:6px;height:6px;border:1px solid #a3a9b1;border-radius:1px;background:#fff"></div>
<div class="abs" style="left:14px;top:548.7px;width:6px;height:6px;border:1px solid #a3a9b1;border-radius:1px;background:#fff"></div>
<div class="t " style="left:28.80px;top:504.00px;font-size:7.5px;line-height:9px;letter-spacing:-0.566px;color:#1b2a3f;font-weight:bold;">Edit</div>
<div class="t " style="left:48.50px;top:504.00px;font-size:7.5px;line-height:9px;letter-spacing:-0.450px;color:#1b2a3f;font-weight:bold;">ID</div>
<svg class="abs" style="left:57.3px;top:505.6px" width="4" height="6" viewBox="0 0 4 6"><path d="M2 0.3 V5 M0.4 3.4 L2 5.2 L3.6 3.4" fill="none" stroke="#1b2a3f" stroke-width="0.8"/></svg>
<div class="t " style="left:103.70px;top:504.00px;font-size:7.5px;line-height:9px;letter-spacing:-0.594px;color:#1b2a3f;font-weight:bold;">Request Type</div>
<div class="t " style="left:235.60px;top:504.00px;font-size:7.5px;line-height:9px;letter-spacing:-0.432px;color:#1b2a3f;font-weight:bold;">Priority</div>
<div class="t " style="left:320.90px;top:504.00px;font-size:7.5px;line-height:9px;letter-spacing:-0.531px;color:#1b2a3f;font-weight:bold;">Requester</div>
<div class="t " style="left:421.50px;top:504.00px;font-size:7.5px;line-height:9px;letter-spacing:-0.537px;color:#1b2a3f;font-weight:bold;">Status</div>
<div class="t " style="left:511.50px;top:504.00px;font-size:7.5px;line-height:9px;letter-spacing:-0.626px;color:#1b2a3f;font-weight:bold;">Summary</div>
<div class="t " style="left:672.80px;top:504.00px;font-size:7.5px;line-height:9px;letter-spacing:-0.678px;color:#1b2a3f;font-weight:bold;">Assigned Person</div>
<div class="t " style="left:762.50px;top:504.00px;font-size:7.5px;line-height:9px;letter-spacing:-0.614px;color:#1b2a3f;font-weight:bold;">Assigned Team</div>
<div class="t " style="left:884.60px;top:504.00px;font-size:7.5px;line-height:9px;letter-spacing:-0.532px;color:#1b2a3f;font-weight:bold;">Answer Needed by</div>
<svg class="abs" style="left:29.2px;top:522.0px" width="9" height="9" viewBox="0 0 9 9"><path d="M0.6 8.4 L1.2 5.9 L5.9 1.2 L7.8 3.1 L3.1 7.8 Z M6.4 0.8 L7 0.2 Q7.4 -0.1 7.8 0.3 L8.7 1.2 Q9.1 1.6 8.8 2 L8.2 2.6 Z" fill="#1f5fbf"/></svg>
<svg class="abs" style="left:29.2px;top:547.4px" width="9" height="9" viewBox="0 0 9 9"><path d="M0.6 8.4 L1.2 5.9 L5.9 1.2 L7.8 3.1 L3.1 7.8 Z M6.4 0.8 L7 0.2 Q7.4 -0.1 7.8 0.3 L8.7 1.2 Q9.1 1.6 8.8 2 L8.2 2.6 Z" fill="#1f5fbf"/></svg>
<div class="t " style="left:48.20px;top:522.00px;font-size:7.5px;line-height:9px;letter-spacing:-0.671px;color:#2a79d2;">38</div>
<div class="t " style="left:48.20px;top:547.00px;font-size:7.5px;line-height:9px;letter-spacing:-0.671px;color:#2a79d2;">33</div>
<div class="t " style="left:103.70px;top:522.00px;font-size:7.5px;line-height:9px;letter-spacing:-0.519px;color:#2b3443;">General HR Issue</div>
<div class="t " style="left:103.70px;top:547.00px;font-size:7.5px;line-height:9px;letter-spacing:-0.385px;color:#2b3443;">Issue Related to Existing Patent</div>
<div class="t " style="left:235.60px;top:522.00px;font-size:7.5px;line-height:9px;letter-spacing:-0.329px;color:#2b3443;">Medium</div>
<div class="t " style="left:235.60px;top:547.00px;font-size:7.5px;line-height:9px;letter-spacing:-0.329px;color:#2b3443;">Medium</div>
<div class="t " style="left:320.90px;top:522.00px;font-size:7.5px;line-height:9px;letter-spacing:-0.394px;color:#2b3443;">Jennifer Rolling</div>
<div class="t " style="left:421.50px;top:522.00px;font-size:7.5px;line-height:9px;letter-spacing:-0.501px;color:#2b3443;">New</div>
<div class="t " style="left:421.50px;top:547.00px;font-size:7.5px;line-height:9px;letter-spacing:-0.519px;color:#2b3443;">Assigned</div>
<div class="t " style="left:511.50px;top:522.00px;font-size:7.5px;line-height:9px;letter-spacing:-0.300px;color:#2b3443;">Am I required to take PTO in 4 hour increments if I</div>
<div class="t " style="left:511.50px;top:531.00px;font-size:7.5px;line-height:9px;letter-spacing:-0.447px;color:#2b3443;">am exempt?</div>
<div class="t " style="left:511.50px;top:547.00px;font-size:7.5px;line-height:9px;letter-spacing:-0.288px;color:#2b3443;">need a status update on this patent</div>
<div class="t " style="left:762.50px;top:522.00px;font-size:7.5px;line-height:9px;letter-spacing:-0.603px;color:#2b3443;">HR Team</div>
<div class="t " style="left:762.50px;top:547.00px;font-size:7.5px;line-height:9px;letter-spacing:-0.379px;color:#2b3443;">Patent Team</div>
<div class="t " style="left:884.60px;top:522.00px;font-size:7.5px;line-height:9px;letter-spacing:-0.456px;color:#2b3443;">Mar 15 2021</div>
<div class="t " style="left:884.60px;top:547.00px;font-size:7.5px;line-height:9px;letter-spacing:-0.456px;color:#2b3443;">Mar 08 2021</div>
<svg class="abs" style="left:0;top:563px" width="980" height="4"><rect x="0" y="1.75" width="980" height="3" fill="#031229"/></svg>
</div>
</body></html>
